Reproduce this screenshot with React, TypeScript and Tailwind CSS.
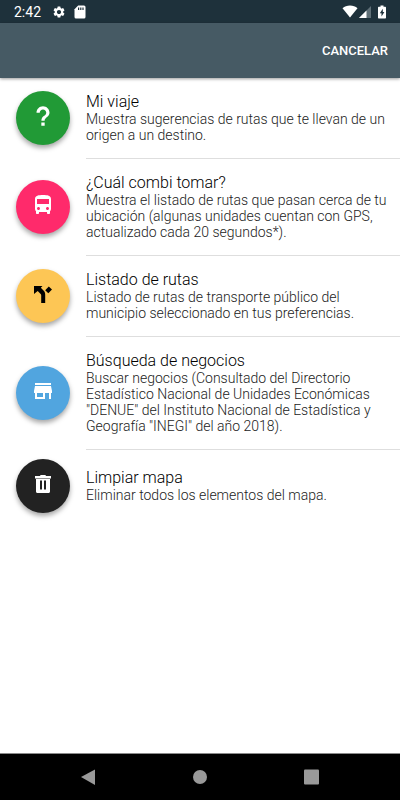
import type { ReactNode } from 'react'
import { IoMdHelp } from 'react-icons/io'
import { MdDirectionsBus, MdSettings, MdStore } from 'react-icons/md'

type MenuOption = {
  id: string
  title: string
  description: string
  color: string
  icon: ReactNode
}

function ForkIcon() {
  return (
    <svg viewBox="0 0 18 17" className="h-[17px] w-[18px]" fill="currentColor" aria-hidden="true">
      <path d="M0 0h8.500L6.800 1.800 9.500 4.600c1.100 1.100 1.700 2.300 1.700 4V17H7.200V9.600c0-.8-.2-1.300-.8-1.900L3.700 5 0 8z" />
      <path d="M14.800.500 18 3.600 14.300 7.300 11.200 4.200z" />
    </svg>
  )
}

function TrashIcon() {
  return (
    <svg viewBox="0 0 16 18" className="h-[18px] w-4" fill="currentColor" aria-hidden="true">
      <path d="M5.300 0h5.400v1H16v2.500H0V1h5.300z" />
      <path
        fillRule="evenodd"
        d="M1 4h14v12.500c0 .9-.6 1.500-1.500 1.500h-11C1.600 18 1 17.400 1 16.500zM5 5.500v9h2v-9zM9 5.500v9h2v-9z"
      />
    </svg>
  )
}

const OPTIONS: MenuOption[] = [
  {
    id: 'trip',
    title: 'Mi viaje',
    description: 'Muestra sugerencias de rutas que te llevan de un origen a un destino.',
    color: 'bg-[#219a36] text-white',
    icon: <IoMdHelp className="h-[26px] w-[26px]" />,
  },
  {
    id: 'combi',
    title: '¿Cuál combi tomar?',
    description:
      'Muestra el listado de rutas que pasan cerca de tu ubicación (algunas unidades cuentan con GPS, actualizado cada 20 segundos*).',
    color: 'bg-[#ff2a6b] text-white',
    icon: <MdDirectionsBus className="h-6 w-6" />,
  },
  {
    id: 'routes',
    title: 'Listado de rutas',
    description:
      'Listado de rutas de transporte público del municipio seleccionado en tus preferencias.',
    color: 'bg-[#fdc655] text-black',
    icon: <ForkIcon />,
  },
  {
    id: 'business',
    title: 'Búsqueda de negocios',
    description:
      'Buscar negocios (Consultado del Directorio Estadístico Nacional de Unidades Económicas "DENUE" del Instituto Nacional de Estadística y Geografía "INEGI" del año 2018).',
    color: 'bg-[#51a5df] text-white',
    icon: <MdStore className="h-6 w-6" />,
  },
  {
    id: 'clear',
    title: 'Limpiar mapa',
    description: 'Eliminar todos los elementos del mapa.',
    color: 'bg-[#222222] text-white',
    icon: <TrashIcon />,
  },
]

function StatusBar() {
  return (
    <div className="flex h-[23px] items-center justify-between bg-[#1e313b] px-[14px] text-white">
      <div className="flex items-center gap-2">
        <span className="w-[30px] text-[14px] leading-4">2:42</span>
        <MdSettings className="h-[14px] w-[14px]" />
        <svg viewBox="0 0 12 14" className="h-[14px] w-3" aria-hidden="true">
          <path d="M4.200.500H10A1.500 1.500 0 0 1 11.500 2v10a1.500 1.500 0 0 1-1.500 1.500H2A1.500 1.500 0 0 1 .5 12V4.200z" fill="#fff" />
          <path d="M4 2.500h1.200V5H4zM6.200 2.500h1.200V5H6.200zM8.400 2.500h1.200V5H8.400z" fill="#1e313b" />
        </svg>
      </div>
      <div className="flex items-center">
        <svg viewBox="0 0 16 13" className="h-[13px] w-4" fill="#fff" aria-hidden="true">
          <path d="M8 12.500.5 3.200C2.500 1.500 5 .500 8 .500s5.500 1 7.500 2.700z" />
        </svg>
        <svg viewBox="0 0 12 12" className="ml-px h-3 w-3" aria-hidden="true">
          <path d="M0 12 12 0v12z" fill="#5f6f77" />
          <path d="M0 12 7.500 4.500V12z" fill="#fff" />
        </svg>
        <svg viewBox="0 0 8 14" className="ml-[7px] h-[14px] w-2" aria-hidden="true">
          <path d="M2.500.500h3v1.300H7c.6 0 1 .4 1 1v9.700c0 .6-.4 1-1 1H1c-.6 0-1-.4-1-1V2.800c0-.6.4-1 1-1h1.500z" fill="#fff" />
          <path d="M4.800 3.800 1.800 8.300h1.700v3.200l2.900-4.400H4.800z" fill="#1e313b" />
        </svg>
      </div>
    </div>
  )
}

function OptionRow({ option, divided }: { option: MenuOption; divided: boolean }) {
  return (
    <li className="flex flex-col">
      {divided ? <div className="ml-[86px] h-px bg-[#dedede]" /> : null}
      <button type="button" className="flex min-h-[72px] w-full items-center gap-4 pr-3 pl-4 text-left">
        <span
          className={`flex h-[54px] w-[54px] shrink-0 items-center justify-center rounded-full pb-1 shadow-[0_3px_5px_rgba(0,0,0,0.35)] ${option.color}`}
        >
          {option.icon}
        </span>
        <span className="min-w-0 flex-1 py-[15px] font-light">
          <span className="block text-[16px] leading-[18px] text-black">{option.title}</span>
          <span className="block text-[14px] leading-4 text-[#222222]">{option.description}</span>
        </span>
      </button>
    </li>
  )
}

function NavigationBar() {
  return (
    <nav className="flex h-[47px] items-center justify-around border-t border-[#8a8a8a] bg-black px-8 text-[#999999]">
      <button type="button" aria-label="Atrás">
        <svg viewBox="0 0 16 16" className="h-4 w-4" fill="currentColor" aria-hidden="true">
          <path d="M15 .500v15.500L1 8z" />
        </svg>
      </button>
      <button type="button" aria-label="Inicio">
        <svg viewBox="0 0 16 16" className="h-4 w-4" fill="currentColor" aria-hidden="true">
          <circle cx="8" cy="8" r="7" />
        </svg>
      </button>
      <button type="button" aria-label="Recientes">
        <svg viewBox="0 0 16 16" className="h-4 w-4" fill="currentColor" aria-hidden="true">
          <rect x="0" y=".5" width="15" height="15" rx="1" />
        </svg>
      </button>
    </nav>
  )
}

export default function App() {
  return (
    <div className="flex min-h-screen flex-col bg-white font-[Roboto,sans-serif]">
      <StatusBar />
      <header className="flex h-[55px] items-center justify-end bg-[#465a64] px-3 shadow-[0_1px_3px_rgba(0,0,0,0.4)]">
        <button type="button" className="text-[13px] leading-4 font-medium text-white">
          CANCELAR
        </button>
      </header>
      <main className="flex-1">
        <ul>
          {OPTIONS.map((option, index) => (
            <OptionRow key={option.id} option={option} divided={index > 0} />
          ))}
        </ul>
      </main>
      <NavigationBar />
    </div>
  )
}
